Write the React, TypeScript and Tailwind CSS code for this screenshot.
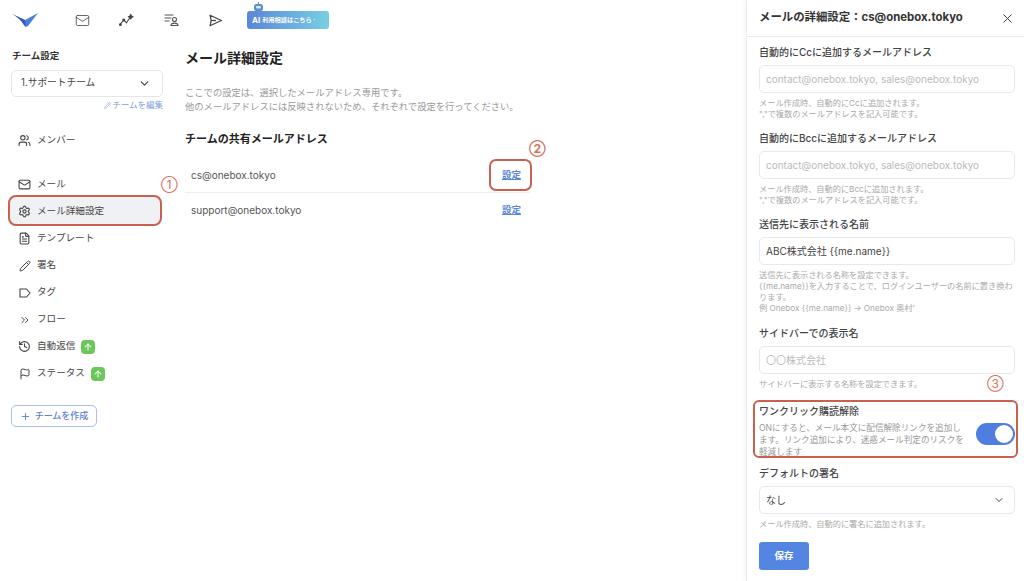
import React from "react";
import { Mail, Settings, FileText, Pencil, ChevronsRight, Flag, Plus, ArrowUp, ChevronDown, X, Users, History } from "lucide-react";

const font = { fontFamily: '"Inter", "Noto Sans CJK JP", sans-serif' };

function Logo() {
  return (
    <svg width="28" height="16" viewBox="0 0 28 16">
      <path d="M1 2 L14 8 L27 1 L17 14 Q15 16 13 13 Q9 6 1 2Z" fill="#4c7fd6" />
      <path d="M1 2 L14 8 L15 15 Q15 15 13 13 Q9 6 1 2Z" fill="#2f5fb4" />
    </svg>
  );
}

function Spark() {
  return (
    <svg width="16" height="14" viewBox="0 0 16 14" fill="none" stroke="#444" strokeWidth="1.2" strokeLinecap="round" strokeLinejoin="round">
      <path d="M1 12 L5 7 L8 10 L12 4" />
      <path d="M12.5 1 L13.2 2.8 L15 3.5 L13.2 4.2 L12.5 6 L11.8 4.2 L10 3.5 L11.8 2.8Z" fill="#444" />
      <circle cx="1.5" cy="12" r="0.9" fill="#444" />
      <circle cx="5" cy="7" r="0.9" fill="#444" />
    </svg>
  );
}

function ListUser() {
  return (
    <svg width="15" height="14" viewBox="0 0 15 14" fill="none" stroke="#555" strokeWidth="1.1" strokeLinecap="round">
      <path d="M1 2h8M1 5h6M1 8h4" />
      <circle cx="10.5" cy="6.5" r="2" />
      <path d="M7 12.5c0-1.6 1.6-2.4 3.5-2.4s3.5.8 3.5 2.4z" />
    </svg>
  );
}

function SendTri() {
  return (
    <svg width="15" height="13" viewBox="0 0 15 13" fill="none" stroke="#444" strokeWidth="1.2" strokeLinejoin="round">
      <path d="M2 1.2 L13.5 6.5 L2 11.8 L3.2 6.5Z" />
      <path d="M3.2 6.5H8" />
    </svg>
  );
}

function TagIcon() {
  return (
    <svg width="12" height="10" viewBox="0 0 12 10" fill="none" stroke="#444" strokeWidth="1.1" strokeLinejoin="round">
      <path d="M1 1h6.5L11 5 7.5 9H1z" />
    </svg>
  );
}

function Robot() {
  return (
    <svg width="13" height="9" viewBox="0 0 13 9" fill="#5b8fc7">
      <rect x="6" y="0" width="1" height="2" />
      <rect x="2" y="2" width="9" height="7" rx="2.5" />
      <rect x="4" y="4" width="5" height="2.5" rx="1" fill="#d7e7f3" />
    </svg>
  );
}

function UpBadge() {
  return (
    <span className="flex h-[14px] w-[14px] items-center justify-center rounded-[4px] bg-[#6cc75a]">
      <ArrowUp size={10} color="#fff" strokeWidth={2.5} />
    </span>
  );
}

function NavRow({ icon, label, badge }: { icon: React.ReactNode; label: string; badge?: boolean }) {
  return (
    <div className="flex h-[27px] items-center pl-[18px] text-[9.6px] text-[#444]">
      <span className="flex w-[13px] justify-center">{icon}</span>
      <span className="ml-[6px]">{label}</span>
      {badge && <span className="ml-[6px]"><UpBadge /></span>}
    </div>
  );
}

function Sidebar() {
  return (
    <aside className="w-[174px] shrink-0 pl-[11px] pr-[11px] pt-[10px]">
      <div className="pl-px text-[9.5px] font-bold leading-[12px] text-[#333]">チーム設定</div>
      <div className="mt-[8px] flex h-[27px] items-center justify-between rounded-[5px] border border-[#e4e6ea] pl-[9px] pr-[11px] text-[9.7px] text-[#444]">
        <span>1.サポートチーム</span>
        <ChevronDown size={13} color="#444" strokeWidth={2} />
      </div>
      <div className="mt-[2px] flex items-center justify-end text-[8.5px] leading-[12px] text-[#7f9fd8]">
        <Pencil size={7} color="#7f9fd8" className="mr-px" />
        チームを編集
      </div>
      <div className="-ml-[11px] mt-[16px]">
        <NavRow icon={<Users size={13} color="#444" />} label="メンバー" />
      </div>
      <div className="-ml-[11px] mt-[17px]">
        <NavRow icon={<Mail size={13} color="#444" />} label="メール" />
        <div className="relative">
          <div className="absolute -top-[3px] left-[8px] h-[31px] w-[154px] rounded-[8px] border-2 border-[#c9614f] bg-[#f0f1f5]" />
          <span className="absolute -top-[21px] left-[161px] text-[12px] leading-[16px] text-[#d9705c]">①</span>
          <div className="relative">
            <NavRow icon={<Settings size={13} color="#444" />} label="メール詳細設定" />
          </div>
        </div>
        <NavRow icon={<FileText size={13} color="#444" />} label="テンプレート" />
        <NavRow icon={<Pencil size={12} color="#444" />} label="署名" />
        <NavRow icon={<TagIcon />} label="タグ" />
        <NavRow icon={<ChevronsRight size={12} color="#444" />} label="フロー" />
        <NavRow icon={<History size={13} color="#444" />} label="自動返信" badge />
        <NavRow icon={<Flag size={12} color="#444" />} label="ステータス" badge />
      </div>
      <div className="mt-[18px] flex h-[22px] w-[86px] items-center justify-center rounded-[5px] border border-[#a9bfe6] text-[9px] font-medium text-[#5b83cf]">
        <Plus size={11} color="#5b83cf" className="mr-[4px]" />
        チームを作成
      </div>
    </aside>
  );
}

function Main() {
  return (
    <main className="w-[356px] pl-[11px] pt-[8px]">
      <h1 className="text-[14px] font-bold leading-[20px] text-[#222]">メール詳細設定</h1>
      <p className="mt-[18px] text-[9.3px] leading-[14px] text-[#999]">
        ここでの設定は、選択したメールアドレス専用です。
        <br />
        他のメールアドレスには反映されないため、それぞれで設定を行ってください。
      </p>
      <h2 className="mt-[17px] text-[11px] font-bold leading-[16px] text-[#222]">チームの共有メールアドレス</h2>
      <div className="mt-[11px] flex h-[35px] items-center justify-between border-b border-[#eeeff2] pl-[6px] pr-[9px] text-[10px] text-[#555]">
        <span>cs@onebox.tokyo</span>
        <span className="relative text-[9.5px] font-bold text-[#5c86d8] underline">
          設定
          <span className="absolute -left-[13px] -top-[9px] h-[32px] w-[43px] rounded-[7px] border-2 border-[#c9614f]" />
          <span className="absolute -top-[27px] left-[27px] text-[12px] leading-[16px] text-[#d9705c] no-underline">②</span>
        </span>
      </div>
      <div className="flex h-[34px] items-center justify-between pl-[6px] pr-[9px] text-[10px] text-[#555]">
        <span>support@onebox.tokyo</span>
        <span className="text-[9.5px] font-bold text-[#5c86d8] underline">設定</span>
      </div>
    </main>
  );
}

function Field({ label, value, placeholder, select, mt, help }: { label: string; value?: string; placeholder?: string; select?: boolean; mt?: string; help: React.ReactNode }) {
  return (
    <div className={mt}>
      <div className="text-[10px] font-medium leading-[14px] text-[#444]">{label}</div>
      <div className="mt-[6px] flex h-[28px] items-center justify-between rounded-[5px] border border-[#e8e9ed] pl-[6px] pr-[9px] text-[10px]">
        {value ? <span className="text-[#444]">{value}</span> : <span className="text-[#bbb]">{placeholder}</span>}
        {select && <ChevronDown size={12} color="#444" strokeWidth={2} />}
      </div>
      <div className="mt-[5px] text-[8.2px] leading-[11px] text-[#aaa]">{help}</div>
    </div>
  );
}

function Panel() {
  return (
    <section className="w-[278px] shrink-0 border-l border-[#eeeeee] shadow-[-2px_0_4px_rgba(0,0,0,0.04)]">
      <header className="flex h-[37px] items-center justify-between border-b border-[#eaeaea] pl-[12px] pr-[9px]">
        <span className="text-[11.4px] font-bold text-[#333]">メールの詳細設定：cs@onebox.tokyo</span>
        <X size={15} color="#444" strokeWidth={1.6} />
      </header>
      <div className="pl-[12px] pr-[9px] pt-[8px]">
        <Field
          label="自動的にCcに追加するメールアドレス"
          placeholder="contact@onebox.tokyo, sales@onebox.tokyo"
          help={<>メール作成時、自動的にCcに追加されます。<br />","で複数のメールアドレスを記入可能です。</>}
        />
        <Field
          mt="mt-[11px]"
          label="自動的にBccに追加するメールアドレス"
          placeholder="contact@onebox.tokyo, sales@onebox.tokyo"
          help={<>メール作成時、自動的にBccに追加されます。<br />","で複数のメールアドレスを記入可能です。</>}
        />
        <Field
          mt="mt-[11px]"
          label="送信先に表示される名前"
          value="ABC株式会社 {{me.name}}"
          help={<>送信先に表示される名称を設定できます。<br />{"{{me.name}}を入力することで、ログインユーザーの名前に置き換わります。"}<br />{"例 Onebox {{me.name}} → Onebox 奥村'"}</>}
        />
        <Field mt="mt-[12px]" label="サイドバーでの表示名" placeholder="〇〇株式会社" help="サイドバーに表示する名称を設定できます。" />
        <div className="relative mt-[14px] flex items-center justify-between pb-[2px]">
          <span className="absolute -left-[6px] -top-[4px] h-[58px] w-[265px] rounded-[6px] border-2 border-[#c9614f]" />
          <span className="absolute -top-[28px] left-[228px] text-[12px] leading-[16px] text-[#d9705c]">③</span>
          <div className="w-[205px]">
            <div className="text-[10px] font-medium leading-[14px] text-[#444]">ワンクリック購読解除</div>
            <div className="mt-[4px] text-[8.6px] leading-[12px] text-[#999]">
              ONにすると、メール本文に配信解除リンクを追加します。リンク追加により、迷惑メール判定のリスクを軽減します
            </div>
          </div>
          <div className="mt-[5px] flex h-[22px] w-[39px] items-center justify-end rounded-full bg-[#4f7ee0] pr-[2px]">
            <span className="h-[18px] w-[18px] rounded-full bg-white" />
          </div>
        </div>
        <Field mt="mt-[6px]" label="デフォルトの署名" value="なし" select help="メール作成時、自動的に署名に追加されます。" />
        <button className="mt-[12px] flex h-[28px] w-[50px] items-center justify-center rounded-[3px] bg-[#5585e3] text-[9.5px] font-bold text-white">保存</button>
      </div>
    </section>
  );
}

export default function App() {
  return (
    <div className="flex h-[581px] w-[1024px] overflow-hidden bg-white" style={font}>
      <div className="flex-1">
        <nav className="flex h-[40px] items-center">
          <span className="ml-[11px] flex w-[28px]"><Logo /></span>
          <span className="ml-[36px] flex w-[15px] justify-center"><Mail size={15} color="#444" strokeWidth={1.3} /></span>
          <span className="ml-[29px] flex w-[15px] justify-center"><Spark /></span>
          <span className="ml-[30px] flex w-[15px] justify-center"><ListUser /></span>
          <span className="ml-[29px] flex w-[15px] justify-center"><SendTri /></span>
          <span className="relative ml-[24px] flex h-[18px] w-[82px] items-center rounded-[3px] bg-gradient-to-r from-[#5b86d8] to-[#78cfe3] pl-[5px] text-white">
            <span className="absolute -top-[9px] left-[5px]"><Robot /></span>
            <span className="text-[8px] font-bold">AI</span>
            <span className="ml-[2px] text-[6.2px] font-bold">利用相談はこちら ·</span>
          </span>
        </nav>
        <div className="flex">
          <Sidebar />
          <Main />
        </div>
      </div>
      <Panel />
    </div>
  );
}
